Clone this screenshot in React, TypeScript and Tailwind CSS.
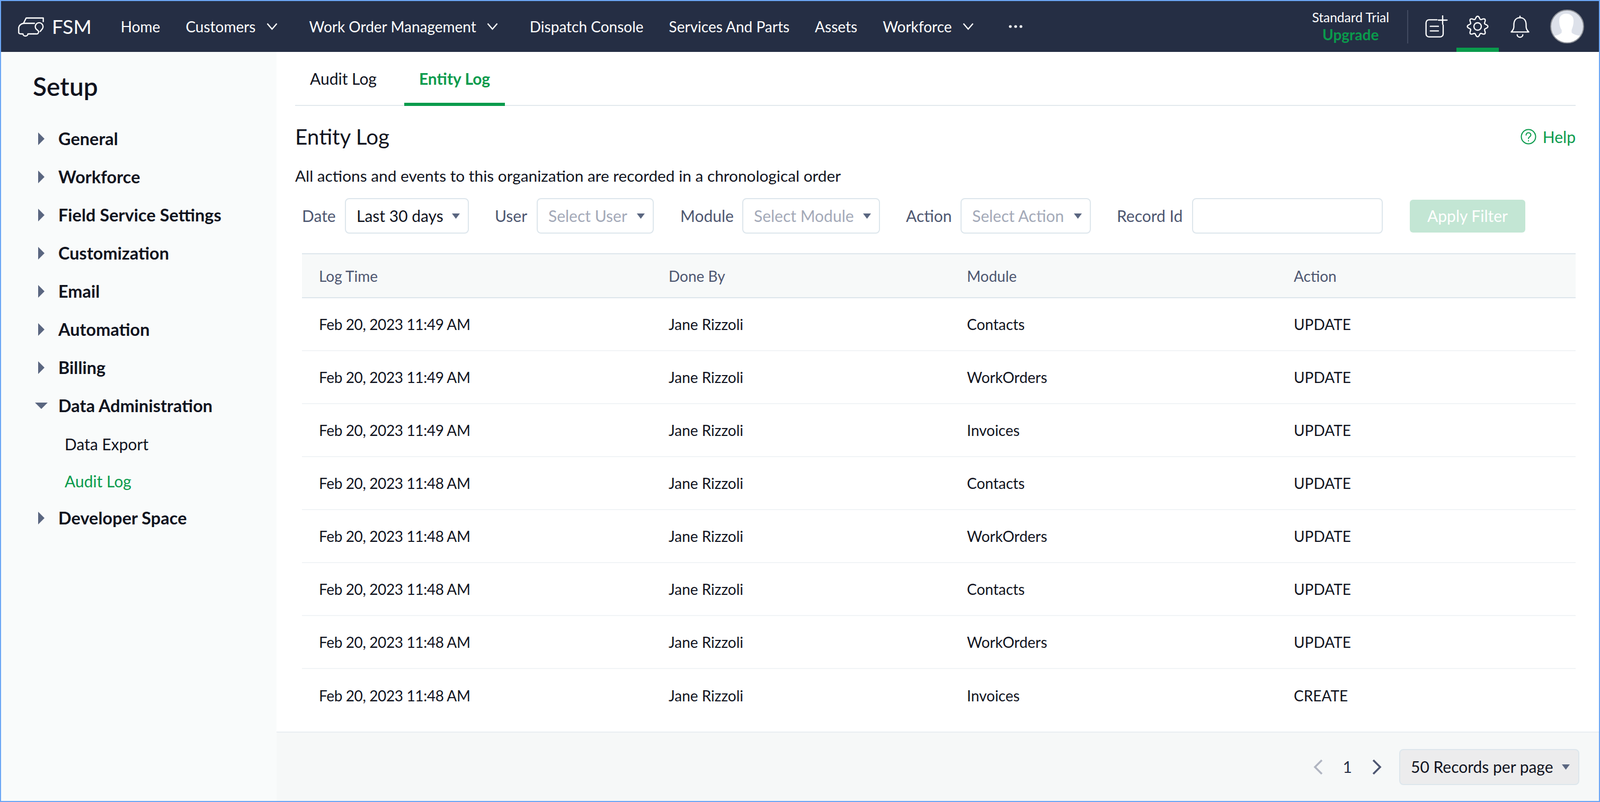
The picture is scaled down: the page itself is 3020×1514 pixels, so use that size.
const navItems = [
  { label: "Home" },
  { label: "Customers", chevron: true },
  { label: "Work Order Management", chevron: true },
  { label: "Dispatch Console" },
  { label: "Services And Parts" },
  { label: "Assets" },
  { label: "Workforce", chevron: true },
];

const sideItems = ["General", "Workforce", "Field Service Settings", "Customization", "Email", "Automation", "Billing"];

const rows = [
  ["Feb 20, 2023 11:49 AM", "Contacts", "UPDATE"],
  ["Feb 20, 2023 11:49 AM", "WorkOrders", "UPDATE"],
  ["Feb 20, 2023 11:49 AM", "Invoices", "UPDATE"],
  ["Feb 20, 2023 11:48 AM", "Contacts", "UPDATE"],
  ["Feb 20, 2023 11:48 AM", "WorkOrders", "UPDATE"],
  ["Feb 20, 2023 11:48 AM", "Contacts", "UPDATE"],
  ["Feb 20, 2023 11:48 AM", "WorkOrders", "UPDATE"],
  ["Feb 20, 2023 11:48 AM", "Invoices", "CREATE"],
];

// eight soft lobes, the cog in the top bar
const gearPath =
  Array.from({ length: 144 }, (_, i) => {
    const a = (i / 144) * Math.PI * 2;
    const r = 16.8 + 2.6 * Math.cos(8 * a);
    return `${i === 0 ? "M" : "L"}${(21 + r * Math.sin(a)).toFixed(2)} ${(21 - r * Math.cos(a)).toFixed(2)}`;
  }).join("") + "Z";

function Caret({ className = "" }: { className?: string }) {
  return (
    <svg width="15" height="10" viewBox="0 0 15 10" className={`shrink-0 ${className}`}>
      <path d="M0 0h15L7.5 10z" fill="#5a6680" />
    </svg>
  );
}

function NavChevron() {
  return (
    <svg width="21" height="14" viewBox="0 0 21 14" fill="none" stroke="#fff" strokeWidth="2.4" className="ml-[20px] mr-[12px] shrink-0">
      <path d="M1.5 1.5 10.5 12l9-10.5" />
    </svg>
  );
}

function SideArrow() {
  return (
    <svg width="12" height="24" viewBox="0 0 12 24" className="ml-[70px] mr-[26px] shrink-0">
      <path d="M0 0l12 12L0 24z" fill="#5a6680" />
    </svg>
  );
}

function PageArrow({ d, color }: { d: string; color: string }) {
  return (
    <svg width="18" height="30" viewBox="0 0 18 30" fill="none" stroke={color} strokeWidth="3.6" className="shrink-0">
      <path d={d} />
    </svg>
  );
}

function SelectBox({ text, placeholder, width }: { text: string; placeholder?: boolean; width: string }) {
  return (
    <div className={`flex h-[67px] items-center justify-between rounded-lg border-2 border-[#dde6ec] bg-white pl-[20px] pr-[15px] ${width} ${placeholder ? "text-[#a3a9b8]" : "text-[#10131e]"}`}>
      <span className="whitespace-nowrap">{text}</span>
      <Caret />
    </div>
  );
}

export default function App() {
  return (
    <div className="flex h-[1514px] w-[3020px] flex-col overflow-hidden border-2 border-[#6ba6f5] bg-white [font-family:Lato,sans-serif] text-[30px] text-[#10131e]">
      <header className="flex h-[96px] shrink-0 items-center bg-[#252e44] text-white">
        <div className="ml-[18px] flex items-center">
          <svg width="160" height="60" viewBox="0 0 480 180" fill="none" stroke="#fff" strokeWidth="7" strokeLinejoin="round" strokeLinecap="round" className="-mr-[82px]">
            <path d="M185 62V42H88L73 72Q50 78 46 95V124Q46 132 58 132H70a14 12 0 0 0 28 0H130" />
            <path d="M73 72H135" />
            <path d="M130 132H145a12 12 0 0 0 14-14Q155 112 145 105a22 22 0 1 1 35-2L168 118" />
          </svg>
          <span className="text-[37px] font-normal">FSM</span>
        </div>
        <nav className="ml-[55px] flex items-center gap-[48px] whitespace-nowrap text-[28px]">
          {navItems.map((item) => (
            <div key={item.label} className="flex items-center">
              <span>{item.label}</span>
              {item.chevron && <NavChevron />}
            </div>
          ))}
          <svg width="26" height="6" viewBox="0 0 26 6" fill="#fff" className="ml-[6px]">
            <circle cx="3" cy="3" r="2.6" />
            <circle cx="13" cy="3" r="2.6" />
            <circle cx="23" cy="3" r="2.6" />
          </svg>
        </nav>
        <div className="ml-auto flex h-full items-center">
          <div className="flex flex-col items-center leading-none">
            <span className="text-[24.5px]">Standard Trial</span>
            <span className="mt-[6px] text-[28px] font-bold text-[#0a9b4c]">Upgrade</span>
          </div>
          <div className="ml-[34px] h-[63px] w-[2px] bg-[#414a60]" />
          <svg width="44" height="42" viewBox="60 50 132 126" fill="none" stroke="#fff" strokeWidth="7" strokeLinecap="round" className="ml-[31px]">
            <path d="M130 75H85a17 17 0 0 0-17 17V155a17 17 0 0 0 17 17H148a17 17 0 0 0 17-17V105" />
            <path d="M162 52V100M138 77H187M92 112H138M92 138H138" />
          </svg>
          <div className="relative ml-[16px] flex h-full w-[80px] items-center justify-center">
            <svg width="42" height="42" viewBox="0 0 42 42" fill="none" stroke="#fff" strokeWidth="2.3">
              <path d={gearPath} strokeLinejoin="round" />
              <circle cx="21" cy="21" r="7" />
            </svg>
            <div className="absolute bottom-0 left-0 h-[8px] w-[80px] bg-[#0a9b4c]" />
          </div>
          <svg width="40" height="43" viewBox="540 55 120 130" fill="none" stroke="#fff" strokeWidth="7" strokeLinejoin="round" strokeLinecap="round" className="ml-[20px]">
            <path d="M600 68C575 68 565 88 565 110V120Q565 135 550 150H650Q635 135 635 120V110C635 88 625 68 600 68Z" />
            <path d="M600 60V68M584 166a16 14 0 0 0 32 0" />
          </svg>
          <div className="ml-[37px] mr-[28px] h-[64px] w-[64px] overflow-hidden rounded-full border-2 border-[#8c8f96] bg-[#dde1ea]">
            <svg width="60" height="60" viewBox="0 0 64 64">
              <path d="M30 6c8 0 15 5 15 14 0 8-2 14-4 19v5c2 3 8 5 17 7v13H6V51c9-2 13-4 15-7v-5c-3-4-5-11-5-19 0-9 6-14 14-14z" fill="#fff" />
            </svg>
          </div>
        </div>
      </header>

      <div className="flex min-h-0 flex-1">
        <aside className="w-[520px] shrink-0 bg-[#f9fbfb]">
          <h1 className="ml-[60px] flex h-[128px] items-center pt-[2px] text-[48px] font-semibold leading-none">Setup</h1>
          <ul className="text-[32.5px] font-bold">
            {sideItems.map((item) => (
              <li key={item} className="flex h-[72px] items-center">
                <SideArrow />
                {item}
              </li>
            ))}
            <li className="flex h-[72px] items-center">
              <svg width="24" height="12" viewBox="0 0 24 12" className="ml-[64px] mr-[20px] shrink-0">
                <path d="M0 0h24L12 12z" fill="#5a6680" />
              </svg>
              Data Administration
            </li>
            <li className="flex h-[72px] items-center pl-[120px] text-[30px] font-normal">Data Export</li>
            <li className="flex h-[68px] items-center pl-[120px] text-[30px] font-normal text-[#0a9b4c]">Audit Log</li>
            <li className="flex h-[72px] items-center">
              <SideArrow />
              Developer Space
            </li>
          </ul>
        </aside>

        <main className="flex min-w-0 flex-1 flex-col">
          <div className="flex-1 pl-[35px] pr-[44px]">
            <div className="flex h-[102px] items-stretch border-b-2 border-[#e3e9ee] text-[30px]">
              <div className="flex items-center px-[28px]">Audit Log</div>
              <div className="relative ml-[24px] flex items-center px-[28px] font-bold text-[#0a9b4c]">
                Entity Log
                <div className="absolute -bottom-[2px] left-0 h-[6px] w-full bg-[#0a9b4c]" />
              </div>
            </div>
            <div className="flex h-[116px] items-center justify-between">
              <h2 className="text-[40.5px] leading-none">Entity Log</h2>
              <div className="flex items-center text-[#0a9b4c]">
                <svg width="30" height="30" viewBox="0 0 30 30" fill="none" stroke="#0a9b4c" strokeWidth="2" strokeLinecap="round">
                  <circle cx="15" cy="15" r="13.5" />
                  <path d="M10.5 12a4.5 4.5 0 0 1 9 0c0 3-4.5 3.5-4.5 6.5" />
                  <path d="M15 22.5v.5" />
                </svg>
                <span className="ml-[12px]">Help</span>
              </div>
            </div>
            <p className="mt-[1px] text-[29.8px] leading-[30px]">All actions and events to this organization are recorded in a chronological order</p>

            <div className="ml-[13px] mt-[27px] flex items-center text-[30px] text-[#4d5670]">
              <span className="w-[81px]">Date</span>
              <SelectBox text="Last 30 days" width="w-[234px]" />
              <span className="ml-[49px] w-[79px]">User</span>
              <SelectBox text="Select User" placeholder width="w-[221px]" />
              <span className="ml-[50px] w-[117px]">Module</span>
              <SelectBox text="Select Module" placeholder width="w-[260px]" />
              <span className="ml-[49px] w-[103px]">Action</span>
              <SelectBox text="Select Action" placeholder width="w-[246px]" />
              <span className="ml-[49px] w-[142px]">Record Id</span>
              <div className="h-[67px] w-[360px] rounded-lg border-2 border-[#dde6ec] bg-white" />
              <button type="button" className="ml-[51px] h-[62px] w-[218px] rounded-md bg-[#c3e6d4] text-[30px] text-white [font-family:'Liberation_Sans',sans-serif]">
                Apply Filter
              </button>
            </div>

            <div className="ml-[13px] mt-[37px] text-[28px]">
              <div className="grid h-[85px] grid-cols-[660px_563px_617px_1fr] items-center border-y-2 border-[#dde6ec] bg-[#f7f9f9] pl-[32px] text-[#4d5670]">
                <span>Log Time</span>
                <span>Done By</span>
                <span>Module</span>
                <span>Action</span>
              </div>
              {rows.map((row, index) => (
                <div
                  key={index}
                  className={`grid h-[100px] grid-cols-[660px_563px_617px_1fr] items-center pl-[32px] ${index < rows.length - 1 ? "border-b-2 border-[#f1f4f6]" : ""}`}
                >
                  <span className="tracking-[-0.38px]">{row[0]}</span>
                  <span>Jane Rizzoli</span>
                  <span>{row[1]}</span>
                  <span>{row[2]}</span>
                </div>
              ))}
            </div>
          </div>

          <div className="flex h-[131px] shrink-0 items-center justify-end border-t-2 border-[#e9eef2] bg-[#f6f8f8] pr-[37px]">
            <PageArrow d="M16 2 3 15l13 13" color="#b0b5c1" />
            <span className="mx-[38px] text-[#252e44]">1</span>
            <PageArrow d="M2 2l13 13L2 28" color="#4d5670" />
            <div className="ml-[33px] flex h-[68px] w-[340px] items-center justify-between rounded-lg border-2 border-[#dde6ec] bg-[#ececed] pl-[20px] pr-[16px]">
              <span className="whitespace-nowrap">50 Records per page</span>
              <Caret />
            </div>
          </div>
        </main>
      </div>
    </div>
  );
}
